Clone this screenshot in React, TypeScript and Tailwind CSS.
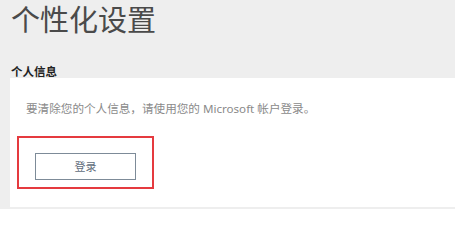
export default function App() {
  return (
    <div className="w-[455px] h-[209px] overflow-hidden bg-[#eeeeee] pl-[10px] font-['Noto_Sans','Noto_Sans_CJK_SC',sans-serif]">
      {/* Title */}
      <h1 className="pl-[1px] text-[29px] leading-[36px] font-normal text-[#4a4a4a] font-['Noto_Sans_CJK_SC',sans-serif]">
        个性化设置
      </h1>

      <h2 className="mt-[28px] pl-[1px] text-[11.5px] leading-[14px] font-bold text-[#222] font-['Noto_Sans_CJK_SC',sans-serif]">
        个人信息
      </h2>

      {/* Panel */}
      <div className="h-[129px] bg-white">
        <p className="pt-[23px] pl-[16px] text-[11.6px] leading-[16px] text-[#8a8a8a]">
          要清除您的个人信息，请使用您的 Microsoft 帐户登录。
        </p>

        <div className="ml-[7px] mt-[19px] w-[137px] h-[53px] border-2 border-[#e53a3f] pt-[15px] pl-[16px]">
          <button className="w-[101px] h-[27px] border border-[#7d8b98] bg-white text-[11px] text-[#5f6d7c] font-['Noto_Sans_CJK_SC',sans-serif]">
            登录
          </button>
        </div>
      </div>
    </div>
  );
}
